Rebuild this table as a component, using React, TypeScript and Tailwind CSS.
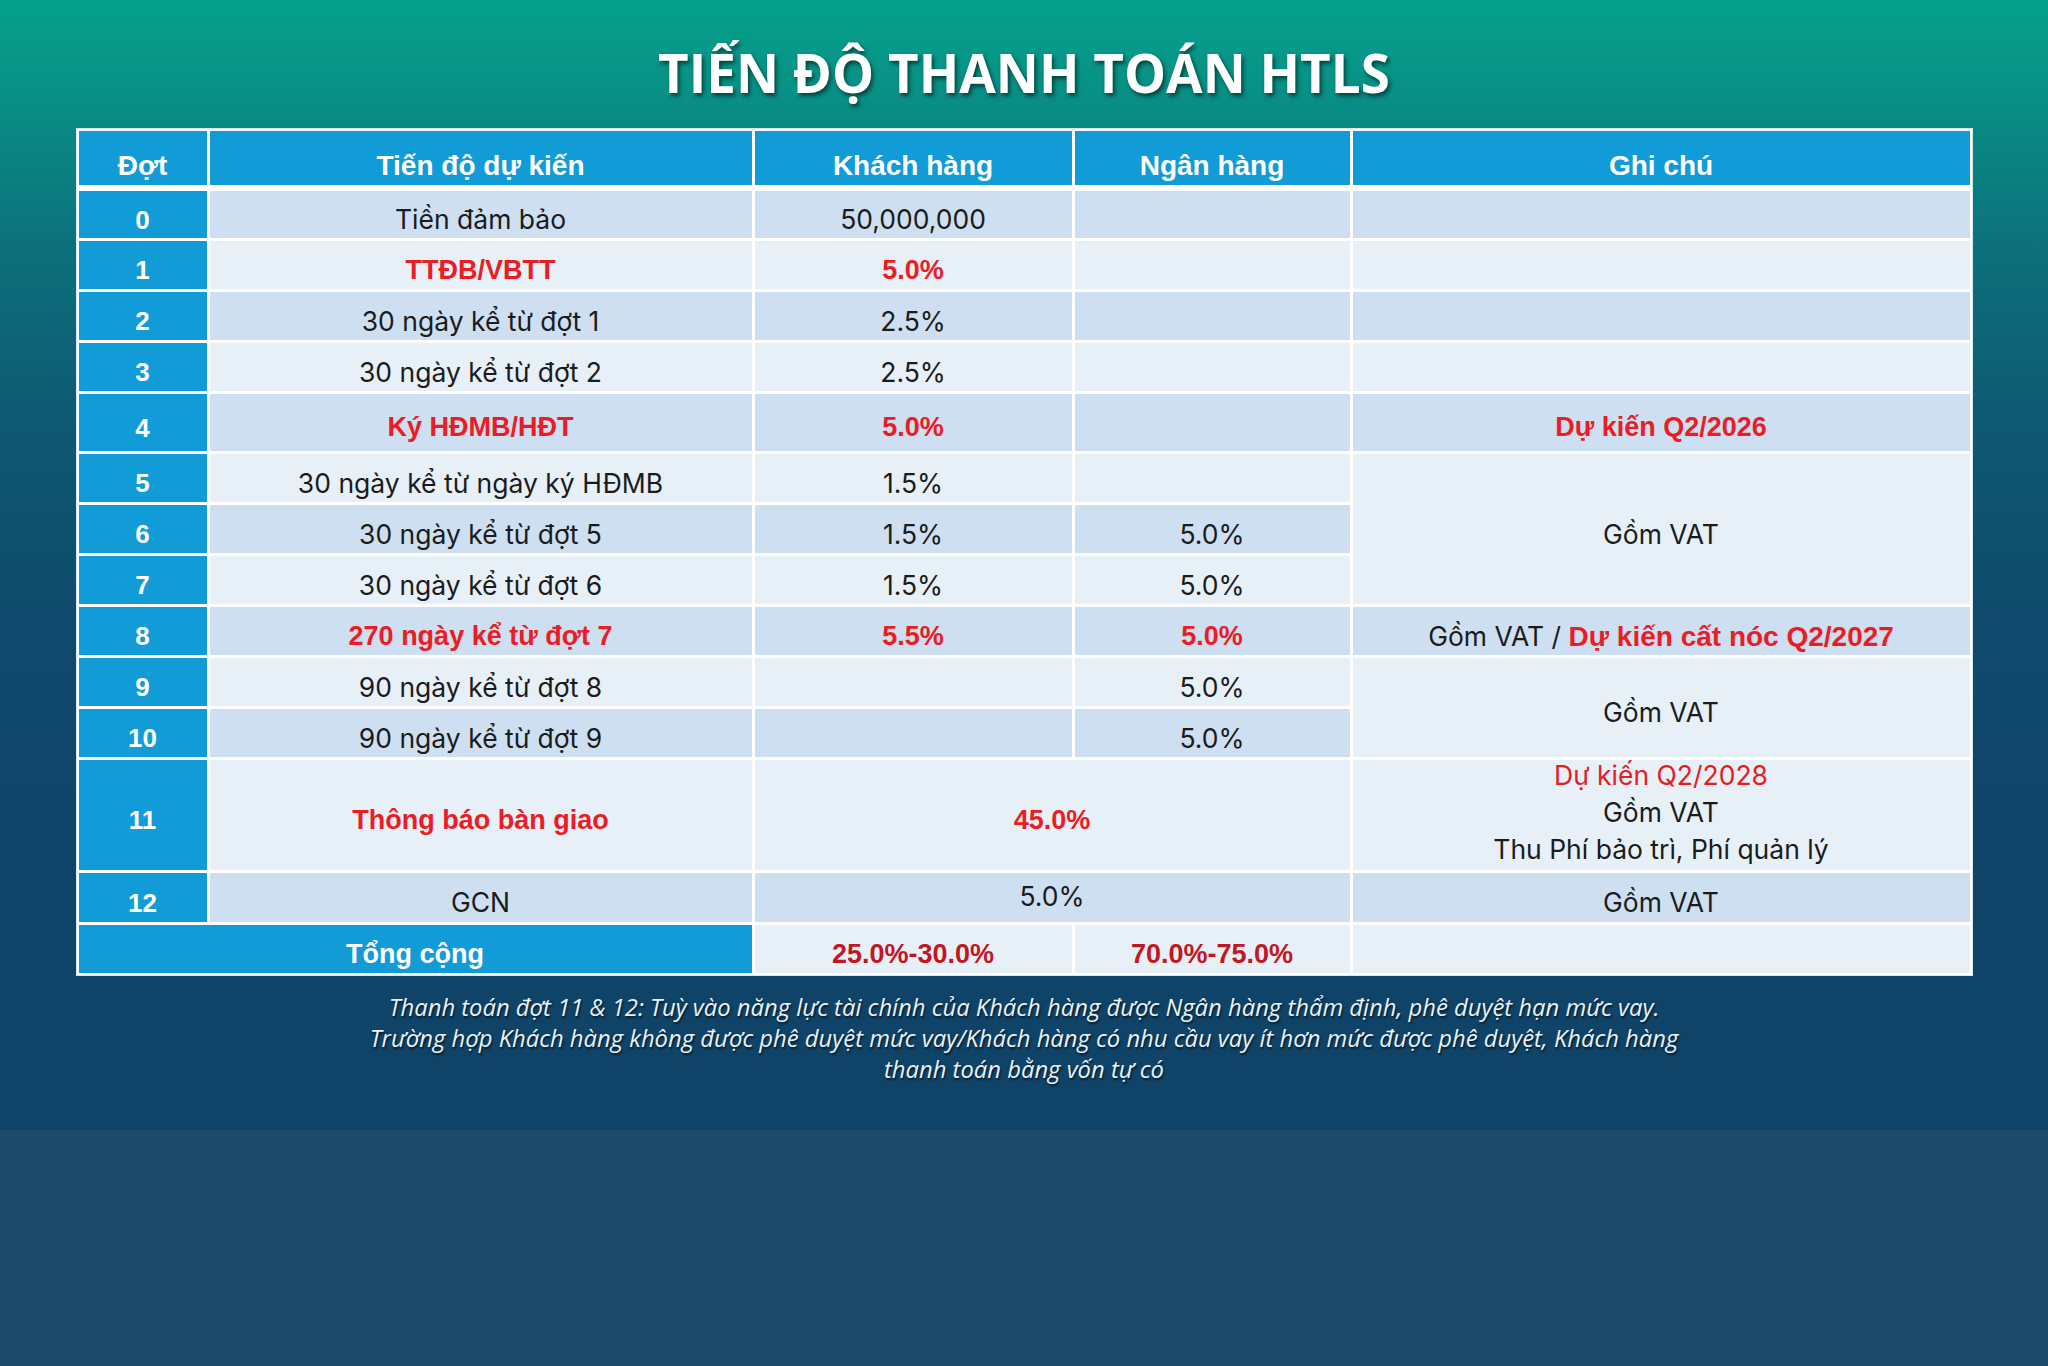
import React from "react";
import clsx from "clsx";

const blue = "bg-[#119bd7]";
const dark = "bg-[#cddff0]";
const light = "bg-[#e7eff7]";

const Cell = ({
  className,
  children,
}: {
  className?: string;
  children?: React.ReactNode;
}) => (
  <div className={clsx("flex items-center justify-center text-center", className)}>
    {children}
  </div>
);

const Num = ({ n }: { n: string }) => (
  <Cell
    className={clsx(
      blue,
      "pt-[11px] leading-tight font-['Liberation_Sans',sans-serif] text-[26px] font-bold text-white"
    )}
  >
    {n}
  </Cell>
);

const Txt = ({ bg, children, red }: { bg: string; children?: React.ReactNode; red?: boolean }) => (
  <Cell
    className={clsx(
      bg,
      "pt-[11px] leading-tight",
      red
        ? "font-['Liberation_Sans',sans-serif] text-[27px] font-bold text-[#ec1c24]"
        : "font-['Inter',sans-serif] text-[26.5px] text-[#1b1b1b]"
    )}
  >
    {children}
  </Cell>
);

const App = () => {
  return (
    <div className="w-[2048px] h-[1366px] flex flex-col overflow-hidden">
      <div className="h-[1130px] flex flex-col items-center bg-[linear-gradient(180deg,#05a28b_0%,#098c85_10%,#0c707b_22%,#0e5872_38%,#0f4a6c_55%,#0f4468_75%,#0f4368_100%)]">
        <div className="h-[128px] w-full flex items-center justify-center pt-[18px]">
          <h1 className="font-['Open_Sans',sans-serif] text-[53px] font-bold text-white [text-shadow:2px_3px_4px_rgba(0,0,0,0.55)]">
            TIẾN ĐỘ THANH TOÁN HTLS
          </h1>
        </div>

        <div className="grid grid-cols-[128px_542px_317px_275px_617px] grid-rows-[57px_47px_48px_48px_48px_57px_48px_48px_48px_48px_48px_48px_110px_49px_48px] gap-[3px] bg-white p-[2px] border border-[#d6e9f2]">
          {/* header */}
          {["Đợt", "Tiến độ dự kiến", "Khách hàng", "Ngân hàng", "Ghi chú"].map((h) => (
            <Cell
              key={h}
              className={clsx(
                blue,
                "border-b-[3px] border-white pt-[14px] leading-tight font-['Liberation_Sans',sans-serif] text-[28px] font-bold text-white"
              )}
            >
              {h}
            </Cell>
          ))}

          {/* 0 */}
          <Num n="0" />
          <Txt bg={dark}>Tiền đảm bảo</Txt>
          <Txt bg={dark}>50,000,000</Txt>
          <Txt bg={dark} />
          <Txt bg={dark} />

          {/* 1 */}
          <Num n="1" />
          <Txt bg={light} red>TTĐB/VBTT</Txt>
          <Txt bg={light} red>5.0%</Txt>
          <Txt bg={light} />
          <Txt bg={light} />

          {/* 2 */}
          <Num n="2" />
          <Txt bg={dark}>30 ngày kể từ đợt 1</Txt>
          <Txt bg={dark}>2.5%</Txt>
          <Txt bg={dark} />
          <Txt bg={dark} />

          {/* 3 */}
          <Num n="3" />
          <Txt bg={light}>30 ngày kể từ đợt 2</Txt>
          <Txt bg={light}>2.5%</Txt>
          <Txt bg={light} />
          <Txt bg={light} />

          {/* 4 */}
          <Num n="4" />
          <Txt bg={dark} red>Ký HĐMB/HĐT</Txt>
          <Txt bg={dark} red>5.0%</Txt>
          <Txt bg={dark} />
          <Txt bg={dark} red>Dự kiến Q2/2026</Txt>

          {/* 5 */}
          <Num n="5" />
          <Txt bg={light}>30 ngày kể từ ngày ký HĐMB</Txt>
          <Txt bg={light}>1.5%</Txt>
          <Txt bg={light} />
          <Cell className={clsx(light, "row-span-3 pt-[11px] font-['Inter',sans-serif] text-[26.5px] text-[#1b1b1b]")}>
            Gồm VAT
          </Cell>

          {/* 6 */}
          <Num n="6" />
          <Txt bg={dark}>30 ngày kể từ đợt 5</Txt>
          <Txt bg={dark}>1.5%</Txt>
          <Txt bg={dark}>5.0%</Txt>

          {/* 7 */}
          <Num n="7" />
          <Txt bg={light}>30 ngày kể từ đợt 6</Txt>
          <Txt bg={light}>1.5%</Txt>
          <Txt bg={light}>5.0%</Txt>

          {/* 8 */}
          <Num n="8" />
          <Txt bg={dark} red>270 ngày kể từ đợt 7</Txt>
          <Txt bg={dark} red>5.5%</Txt>
          <Txt bg={dark} red>5.0%</Txt>
          <Cell className={clsx(dark, "pt-[11px] font-['Inter',sans-serif] text-[26.5px] text-[#1b1b1b] whitespace-pre")}>
            Gồm VAT /{" "}
            <span className="font-['Liberation_Sans',sans-serif] text-[28px] font-bold text-[#ec1c24]">
              Dự kiến cất nóc Q2/2027
            </span>
          </Cell>

          {/* 9 */}
          <Num n="9" />
          <Txt bg={light}>90 ngày kể từ đợt 8</Txt>
          <Txt bg={light} />
          <Txt bg={light}>5.0%</Txt>
          <Cell className={clsx(light, "row-span-2 pt-[11px] font-['Inter',sans-serif] text-[26.5px] text-[#1b1b1b]")}>
            Gồm VAT
          </Cell>

          {/* 10 */}
          <Num n="10" />
          <Txt bg={dark}>90 ngày kể từ đợt 9</Txt>
          <Txt bg={dark} />
          <Txt bg={dark}>5.0%</Txt>

          {/* 11 */}
          <Num n="11" />
          <Txt bg={light} red>Thông báo bàn giao</Txt>
          <Cell className={clsx(light, "col-span-2 pt-[11px] font-['Liberation_Sans',sans-serif] text-[27px] font-bold text-[#ec1c24]")}>
            45.0%
          </Cell>
          <Cell className={clsx(light, "flex-col pb-[6px] font-['Inter',sans-serif] text-[26.5px] leading-[37px] text-[#1b1b1b]")}>
            <span className="text-[#e3201f]">Dự kiến Q2/2028</span>
            <span>Gồm VAT</span>
            <span>Thu Phí bảo trì, Phí quản lý</span>
          </Cell>

          {/* 12 */}
          <Num n="12" />
          <Txt bg={dark}>GCN</Txt>
          <Cell className={clsx(dark, "col-span-2 pb-[2px] leading-tight font-['Inter',sans-serif] text-[26.5px] text-[#1b1b1b]")}>
            5.0%
          </Cell>
          <Txt bg={dark}>Gồm VAT</Txt>

          {/* total */}
          <Cell className={clsx(blue, "col-span-2 pt-[12px] leading-tight font-['Liberation_Sans',sans-serif] text-[27px] font-bold text-white")}>
            Tổng cộng
          </Cell>
          <Cell className={clsx(light, "pt-[12px] leading-tight font-['Liberation_Sans',sans-serif] text-[27px] font-bold text-[#c3161f]")}>
            25.0%-30.0%
          </Cell>
          <Cell className={clsx(light, "pt-[12px] leading-tight font-['Liberation_Sans',sans-serif] text-[27px] font-bold text-[#c3161f]")}>
            70.0%-75.0%
          </Cell>
          <Cell className={light} />
        </div>

        <div className="mt-[16px] text-center font-['Open_Sans',sans-serif] italic text-[23.8px] leading-[31px] text-[#e9f2f7] [text-shadow:1px_2px_2px_rgba(0,0,0,0.6)]">
          <p className="whitespace-nowrap">
            Thanh toán đợt 11 &amp; 12: Tuỳ vào năng lực tài chính của Khách hàng được Ngân hàng thẩm định, phê duyệt hạn mức vay.
          </p>
          <p className="whitespace-nowrap">
            Trường hợp Khách hàng không được phê duyệt mức vay/Khách hàng có nhu cầu vay ít hơn mức được phê duyệt, Khách hàng
          </p>
          <p className="whitespace-nowrap">thanh toán bằng vốn tự có</p>
        </div>
      </div>
      <div className="flex-1 bg-[#1b4a6b]" />
    </div>
  );
};

export default App;
